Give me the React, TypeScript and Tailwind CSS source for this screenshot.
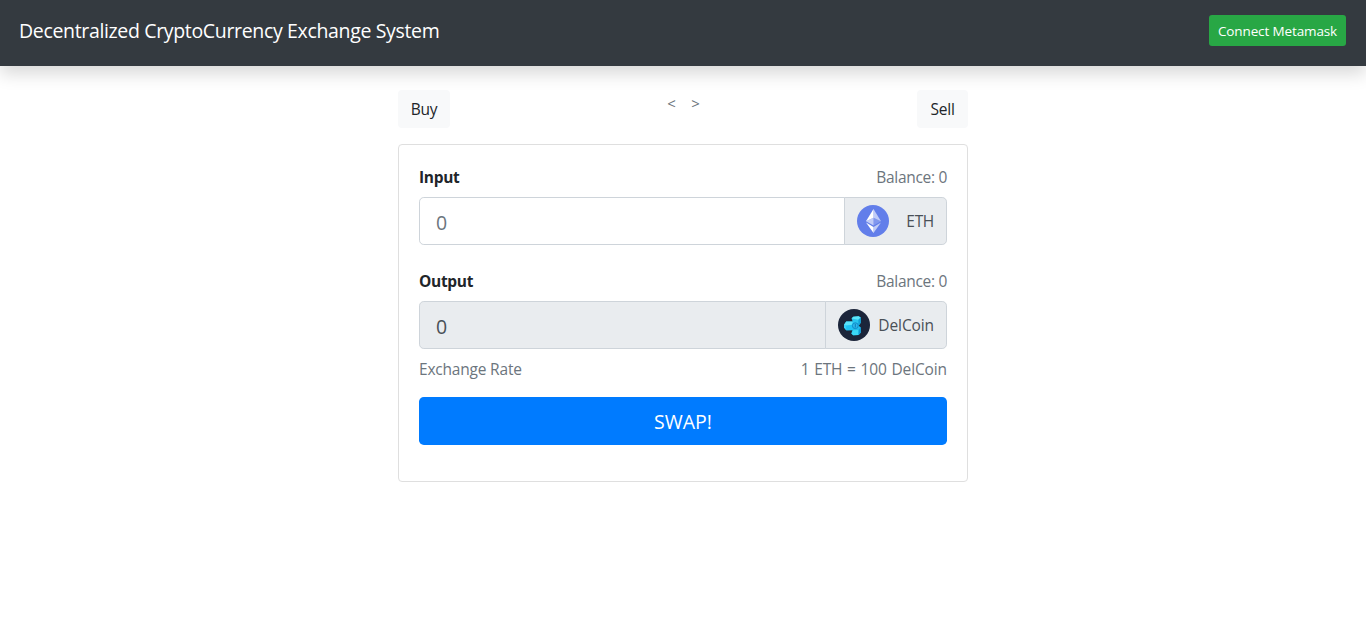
import type { ReactNode } from 'react';

function EthLogo() {
  return (
    <svg width="32" height="32" viewBox="0 0 32 32" className="block shrink-0">
      <circle cx="16" cy="16" r="16" fill="#627eea" />
      <path d="M16.5 4v8.87l7.5 3.35z" fill="#fff" fillOpacity=".602" />
      <path d="M16.5 4L9 16.22l7.5-3.35z" fill="#fff" />
      <path d="M16.5 21.97v6.03L24 17.62z" fill="#fff" fillOpacity=".602" />
      <path d="M16.5 28v-6.03L9 17.62z" fill="#fff" />
      <path d="M16.5 20.57l7.5-4.35-7.5-3.35z" fill="#fff" fillOpacity=".2" />
      <path d="M9 16.22l7.5 4.35v-7.7z" fill="#fff" fillOpacity=".602" />
    </svg>
  );
}

function DelLogo() {
  return (
    <svg width="32" height="32" viewBox="0 0 32 32" className="block shrink-0">
      <circle cx="16" cy="16" r="16" fill="#1b253a" />
      <path d="M13.6 9.6l1.6-1.9 5.4-.5 2.1 1.2v5.4l-2.3 3.4-4.8-1.6z" fill="#27c5ef" />
      <path d="M13.6 9.6l1.6-1.9 5.4-.5 2.1 1.2-2.3 2.4z" fill="#5ce6fb" />
      <path d="M20.4 10.8l2.3-2.4v5.4l-2.3 3.4z" fill="#129fd6" />
      <path d="M6 15.8l2.2-3.2 6.6-.2 3.2 3.8-2 5-7.6.2L6 18.6z" fill="#1fc3f4" />
      <path d="M6 15.8l2.2-3.2 6.6-.2-.6 3.4-6 .6z" fill="#5be3fb" />
      <path d="M6 15.8l2.2.6v4.9L6 18.6z" fill="#38d2fa" />
      <path d="M14.8 19.4l3.6-2.6h2.2l2.1 1.4.2 5.2-2.2 2.6-5.6.3-1.7-1.9z" fill="#22bdeb" />
      <path d="M13.4 24.4l1.8-3.2 5.4-.2-.2 5-5.3.3z" fill="#3ad8f7" />
      <path d="M20.6 21l2.1-2.8.2 5.2-2.4 2.6z" fill="#109bd5" />
      <circle cx="17.3" cy="16.7" r="2.9" fill="#2bb9ec" stroke="#0f86c4" strokeWidth=".9" />
      <path d="M17.3 14.9v3.6" stroke="#0f75b3" strokeWidth=".9" />
    </svg>
  );
}

function FieldLabel({ children }: { children: ReactNode }) {
  return (
    <div className="flex h-6 items-center justify-between">
      <b className="tracking-[-0.3px]">{children}</b>
      <span className="text-[#6c757d] tracking-[-0.3px]">Balance: 0</span>
    </div>
  );
}

export default function App() {
  return (
    <div className="min-h-[617px] bg-white font-['Open_Sans','Noto_Sans',sans-serif] text-[15.5px] leading-6 text-[#212529]">
      <nav className="flex h-[66px] items-start justify-between bg-[#343a40] pl-[19px] pr-5 pt-[15px] shadow-[0_8px_16px_rgba(0,0,0,0.15)]">
        <span className="text-[19.5px] leading-8 tracking-[-0.34px] whitespace-nowrap text-white">
          Decentralized CryptoCurrency Exchange System
        </span>
        <button className="h-[31px] w-[137px] rounded-[3px] bg-[#28a745] pt-px text-[13.5px] leading-[21px] tracking-[-0.13px] whitespace-nowrap text-white">
          Connect Metamask
        </button>
      </nav>
      <main className="mx-auto w-[570px] pt-6">
        <div className="mb-4 flex items-start justify-between">
          <button className="h-[38px] w-[52px] rounded bg-[#f8f9fa] tracking-[-0.25px]">Buy</button>
          <span className="flex gap-[15.5px] text-[15px] leading-[26px] text-[#6c757d]">
            <span>&lt;</span>
            <span>&gt;</span>
          </span>
          <button className="h-[38px] w-[51px] rounded bg-[#f8f9fa] tracking-[-0.2px]">Sell</button>
        </div>
        <section className="h-[338px] rounded border border-[#dfdfdf] px-5 pt-5">
          <FieldLabel>Input</FieldLabel>
          <div className="mt-2 flex h-12">
            <input
              placeholder="0"
              className="min-w-0 grow rounded-l-[4.8px] border border-[#ced4da] px-4 pt-[3px] text-[19.5px] outline-none placeholder:text-[#6c757d] placeholder:opacity-100"
            />
            <div className="-ml-px flex w-[103px] items-center justify-between rounded-r-[4.8px] border border-[#ced4da] bg-[#e9ecef] px-3 text-[#495057]">
              <EthLogo />
              <span className="tracking-[-0.3px]">ETH</span>
            </div>
          </div>
          <div className="mt-6">
            <FieldLabel>Output</FieldLabel>
          </div>
          <div className="mt-2 flex h-12">
            <input
              placeholder="0"
              disabled
              className="min-w-0 grow rounded-l-[4.8px] border border-[#ced4da] bg-[#e9ecef] px-4 pt-[3px] text-[19.5px] placeholder:text-[#495057] placeholder:opacity-100"
            />
            <div className="-ml-px flex w-[122px] items-center justify-between rounded-r-[4.8px] border border-[#ced4da] bg-[#e9ecef] px-3 text-[#495057]">
              <DelLogo />
              <span className="tracking-[-0.1px]">DelCoin</span>
            </div>
          </div>
          <div className="mt-2 flex h-6 items-center justify-between text-[#6c757d]">
            <span className="tracking-[-0.2px]">Exchange Rate</span>
            <span className="tracking-[-0.12px] [word-spacing:0.8px]">1 ETH = 100 DelCoin</span>
          </div>
          <button className="mt-4 block h-12 w-full rounded-[4.8px] bg-[#007bff] pt-0.5 text-[19.5px] text-white">
            SWAP!
          </button>
        </section>
      </main>
    </div>
  );
}
